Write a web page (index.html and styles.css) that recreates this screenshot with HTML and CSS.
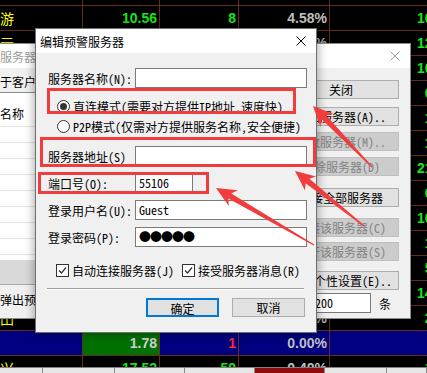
FILE: index.html
```html
<!DOCTYPE html>
<html lang="zh-CN">
<head>
  <meta charset="UTF-8">
  <title>编辑预警服务器</title>
  <link rel="stylesheet" href="styles.css">
</head>
<body>
<div class="screen">
  <div class="quotes">
    <div class="grid">
      <div class="c y"></div><div class="c"></div><div class="c"></div><div class="c"></div><div class="c"></div>
      <div class="c y">游</div><div class="c g">10.56</div><div class="c g">8</div><div class="c">4.58%</div><div class="c g">10.80</div>
      <div class="c y">亏</div><div class="c g">12.16</div><div class="c g">5</div><div class="c">3.21%</div><div class="c g">12.35</div>
      <div class="c y">中</div><div class="c g">9.84</div><div class="c g">3</div><div class="c">1.02%</div><div class="c g">10.25</div>
      <div class="c y">科</div><div class="c g">0.91</div><div class="c g">2</div><div class="c">0.55%</div><div class="c g">0.92</div>
      <div class="c y">华</div><div class="c g">1.50</div><div class="c g">7</div><div class="c">2.04%</div><div class="c g">1.53</div>
      <div class="c y">光</div><div class="c g">1.18</div><div class="c g">4</div><div class="c">1.69%</div><div class="c g">1.20</div>
      <div class="c y">海</div><div class="c g">21.40</div><div class="c g">12</div><div class="c">2.24%</div><div class="c g">21.88</div>
      <div class="c y">东</div><div class="c g">0.64</div><div class="c g">1</div><div class="c">1.56%</div><div class="c g">0.65</div>
      <div class="c y">新</div><div class="c g">9.97</div><div class="c g">6</div><div class="c">1.50%</div><div class="c g">10.12</div>
      <div class="c y">金</div><div class="c g">1.05</div><div class="c g">9</div><div class="c">1.90%</div><div class="c g">1.07</div>
      <div class="c y">天</div><div class="c g">5.28</div><div class="c g">3</div><div class="c">1.52%</div><div class="c g">5.36</div>
      <div class="c y">利</div><div class="c g">13.90</div><div class="c g">8</div><div class="c">2.23%</div><div class="c g">14.21</div>
      <div class="c y">田</div><div class="c g">2.42</div><div class="c g">2</div><div class="c">1.26%</div><div class="c g">2.45</div>
      <div class="c blue"></div><div class="c hl">1.78</div><div class="c blue red">1</div><div class="c blue">0.00%</div><div class="c blue"></div>
      <div class="c y">兴</div><div class="c g">17.52</div><div class="c g">59</div><div class="c">0.40%</div><div class="c g">1.95</div>
    </div>
  </div>
  <div class="tabs">
    <span class="tab t-a"></span><span class="tab t-b"></span><span class="tab t-c"></span><span class="tab t-c"></span><span class="tab t-c tab-on"></span><span class="tab t-d"></span><span class="tab t-e"></span>
  </div>

  <div class="win back">
    <div class="back-title">
      <span class="caption">服务器设置</span>
      <svg class="x" width="10" height="10" viewBox="0 0 10 10"><path d="M0.5 0.5L9.5 9.5M9.5 0.5L0.5 9.5" stroke="#9a9a9a" stroke-width="1"/></svg>
    </div>
    <div class="back-body">
      <div class="back-left">
        <div class="hint">于客户端之间互相发送预警</div>
        <div class="list">
          <div class="list-head">名称</div>
          <div class="list-row"></div><div class="list-row"></div><div class="list-row"></div><div class="list-row"></div>
          <div class="list-row"></div><div class="list-row"></div><div class="list-row"></div><div class="list-row"></div>
          <div class="list-fill"></div>
          <div class="list-scroll"></div>
        </div>
        <div class="hint popup">弹出预警</div>
      </div>
      <div class="side">
        <button class="b">关闭</button>
        <button class="b">添加服务器(A)..</button>
        <button class="b off">修改服务器(M)..</button>
        <button class="b off">删除服务器(D)</button>
        <button class="b">连接全部服务器</button>
        <button class="b off">连接该服务器(C)</button>
        <button class="b off">断开该服务器(S)</button>
        <button class="b">预警个性设置(E)..</button>
        <div class="limit"><span class="field">200</span><span>条</span></div>
      </div>
    </div>
  </div>

  <div class="win dlg">
    <div class="dlg-title">
      <span>编辑预警服务器</span>
      <svg class="x" width="10" height="10" viewBox="0 0 10 10"><path d="M0.5 0.5L9.5 9.5M9.5 0.5L0.5 9.5" stroke="#000" stroke-width="1"/></svg>
    </div>
    <div class="dlg-body">
      <div class="row r-name"><label>服务器名称(N):</label><span class="field w-full"></span></div>
      <div class="opt opt-first"><span class="radio on"></span>直连模式(需要对方提供IP地址,速度快)</div>
      <div class="opt"><span class="radio"></span>P2P模式(仅需对方提供服务名称,安全便捷)</div>
      <div class="row r-addr"><label>服务器地址(S)</label><span class="field w-full"></span></div>
      <div class="row r-next"><label>端口号(O):</label><span class="field w-port">55106</span></div>
      <div class="row r-next"><label>登录用户名(U):</label><span class="field w-full">Guest</span></div>
      <div class="row r-next"><label>登录密码(P):</label><span class="field w-full dots">●●●●●</span></div>
      <div class="checks">
        <label><span class="check"><svg width="11" height="11" viewBox="0 0 11 11"><path d="M2 5.5L4.5 8L9 2.5" fill="none" stroke="#333" stroke-width="1.2"/></svg></span>自动连接服务器(J)</label>
        <label class="check-2"><span class="check"><svg width="11" height="11" viewBox="0 0 11 11"><path d="M2 5.5L4.5 8L9 2.5" fill="none" stroke="#333" stroke-width="1.2"/></svg></span>接受服务器消息(R)</label>
      </div>
      <div class="sep"></div>
      <div class="actions">
        <button class="b b-default">确定</button>
        <button class="b">取消</button>
      </div>
    </div>
  </div>

  <div class="mark mark-mode"></div>
  <div class="mark mark-addr"></div>
  <div class="mark mark-port"></div>

  <svg class="arrows" width="427" height="373" viewBox="0 0 427 373">
    <polygon points="372.4,166.6 326.3,115.4 333.4,114.1 313,106 320.4,126.7 321.9,119.6 371.6,167.4"/>
    <polygon points="364.4,225.5 309.4,178.7 316.2,176.5 295,171 305,190.5 305.6,183.3 363.6,226.5"/>
    <polygon points="314.3,244.5 231.3,193.4 237.8,190.3 216,188 228.8,205.9 228.3,198.6 313.7,245.5"/>
  </svg>
</div>
</body>
</html>
```

FILE: styles.css
```css
body {
  margin: 0;
  background: #000;
}

.screen {
  position: relative;
  width: 427px;
  height: 373px;
  overflow: hidden;
  display: flex;
  flex-direction: column;
  font-family: "Noto Sans Mono CJK SC", "Noto Sans CJK SC", monospace;
  font-size: 12px;
  color: #000;
}

/* quote table behind the windows */
.quotes {
  height: 367px;
  overflow: hidden;
  flex: none;
}
.grid {
  display: grid;
  grid-template-columns: 83px 77px 79px 91px 125px;
  grid-auto-rows: 25px;
  margin-top: -19px;
  font: bold 14px "Liberation Sans", "Noto Sans CJK SC", sans-serif;
}
.c {
  box-sizing: border-box;
  border-right: 1px solid #63301c;
  border-bottom: 1px solid #63301c;
  padding-right: 2px;
  line-height: 24px;
  text-align: right;
  white-space: nowrap;
  overflow: hidden;
  color: #c0c0c0;
}
.c.g { color: #18e618; }
.c.y {
  color: #ffff00;
  text-align: left;
  font: 14px "Noto Sans CJK SC", sans-serif;
  line-height: 24px;
}
.c.blue { background: #000080; }
.c.red { color: #ff2a2a; }
.c.hl {
  background: #007000;
  color: #d0d0d0;
}

.tabs {
  flex: 1;
  display: flex;
  background: #d6d3ce;
  border-top: 1px solid #808080;
}
.tab {
  border-right: 1px solid #8a8a8a;
  background: #e6e6e6;
}
.t-a { width: 42px; }
.t-b { width: 71px; }
.t-c { width: 69px; }
.t-d { width: 61px; }
.t-e { flex: 1; }
.tab-on { background: #8e0c0c; }

/* windows */
.win {
  position: absolute;
  box-sizing: border-box;
  background: #f0f0f0;
  display: flex;
  flex-direction: column;
}
.b {
  box-sizing: border-box;
  height: 19px;
  padding: 0;
  border: 1px solid #adadad;
  background: #e1e1e1;
  font: inherit;
  color: #000;
  white-space: nowrap;
  overflow: hidden;
}
.b.off {
  background: #cccccc;
  border-color: #bfbfbf;
  color: #838383;
}
.field {
  display: block;
  box-sizing: border-box;
  height: 20px;
  border: 1px solid #7a7a7a;
  background: #fff;
  padding: 0 3px;
  line-height: 18px;
  white-space: nowrap;
}

.back {
  left: -1px;
  top: 43px;
  width: 412px;
  height: 276px;
  border: 1px solid #8c8c8c;
  box-shadow: 0 0 6px rgba(0, 0, 0, 0.45);
}
.back-title {
  height: 24px;
  flex: none;
  background: #fff;
  color: #9c9c9c;
  display: flex;
  align-items: center;
  justify-content: space-between;
  padding-right: 10px;
}
.back-body {
  flex: 1;
  display: flex;
}
.back-left {
  flex: 1;
  padding-top: 6px;
  overflow: hidden;
}
.hint {
  line-height: 16px;
  white-space: nowrap;
}
.list {
  margin-top: 2px;
  border-top: 1px solid #8a8a8a;
  background: #fff;
}
.list-head {
  height: 34px;
  box-sizing: border-box;
  padding-top: 13px;
  line-height: 16px;
  border-bottom: 1px solid #e3e3e3;
}
.list-row {
  height: 16px;
  box-sizing: border-box;
  border-bottom: 1px solid #e3e3e3;
}
.list-fill { height: 5px; }
.list-scroll {
  height: 25px;
  box-sizing: border-box;
  background: #d9d9d9;
  border-bottom: 1px solid #a8a8a8;
}
.popup { margin-top: 7px; }

.side {
  width: 116px;
  margin-right: 11px;
  display: flex;
  flex-direction: column;
}
.side .b:nth-child(1) { margin-top: 12px; }
.side .b:nth-child(2) { margin-top: 8px; }
.side .b:nth-child(3) { margin-top: 6px; }
.side .b:nth-child(4) { margin-top: 6px; }
.side .b:nth-child(5) { margin-top: 12px; }
.side .b:nth-child(6) { margin-top: 11px; }
.side .b:nth-child(7) { margin-top: 5px; }
.side .b:nth-child(8) { margin-top: 10px; }
.limit {
  display: flex;
  align-items: center;
  gap: 8px;
  margin-top: 3px;
}
.limit .field {
  width: 60px;
  margin-left: 28px;
}

/* front dialog */
.dlg {
  left: 35px;
  top: 28px;
  width: 282px;
  height: 305px;
  border: 1px solid #6f6f6f;
  box-shadow: 0 0 10px rgba(0, 0, 0, 0.4);
}
.dlg-title {
  height: 24px;
  flex: none;
  background: #fff;
  display: flex;
  align-items: center;
  justify-content: space-between;
  padding: 0 10px 0 4px;
}
.dlg-body {
  padding: 0 9px 0 12px;
}
.row {
  display: flex;
  align-items: center;
}
.row label {
  width: 87px;
  white-space: nowrap;
}
.w-full { width: 172px; }
.w-port { width: 58px; }
.r-name { margin-top: 15px; }
.r-addr { margin-top: 10px; }
.r-next { margin-top: 7px; }
.dots { letter-spacing: -1px; }

.opt {
  height: 20px;
  display: flex;
  align-items: center;
  gap: 3px;
  padding-left: 9px;
  white-space: nowrap;
}
.opt-first { margin-top: 8px; }
.radio {
  width: 13px;
  height: 13px;
  box-sizing: border-box;
  border: 1px solid #333;
  border-radius: 50%;
  background: #fff;
  display: flex;
  align-items: center;
  justify-content: center;
}
.radio.on::after {
  content: "";
  width: 7px;
  height: 7px;
  border-radius: 50%;
  background: #333;
}

.checks {
  display: flex;
  align-items: center;
  height: 16px;
  margin-top: 15px;
  padding-left: 8px;
  white-space: nowrap;
}
.checks label {
  display: flex;
  align-items: center;
  gap: 3px;
}
.check-2 { margin-left: 8px; }
.check {
  width: 13px;
  height: 13px;
  box-sizing: border-box;
  border: 1px solid #333;
  background: #fff;
  display: flex;
}

.sep {
  margin: 10px 3px 0 -1px;
  border-top: 1px solid #a0a0a0;
  border-bottom: 1px solid #fff;
}
.actions {
  display: flex;
  justify-content: flex-end;
  gap: 13px;
  margin: 8px 2px 0 0;
}
.actions .b { width: 73px; }
.b-default { border: 2px solid #0078d7; }

/* annotations */
.mark {
  position: absolute;
  box-sizing: border-box;
  border: 3px solid #f03c3c;
}
.mark-mode { left: 47px; top: 88px; width: 249px; height: 26px; }
.mark-addr { left: 40px; top: 137px; width: 276px; height: 30px; }
.mark-port { left: 38px; top: 172px; width: 171px; height: 22px; }

.arrows {
  position: absolute;
  left: 0;
  top: 0;
  fill: #f03c3c;
}
```
